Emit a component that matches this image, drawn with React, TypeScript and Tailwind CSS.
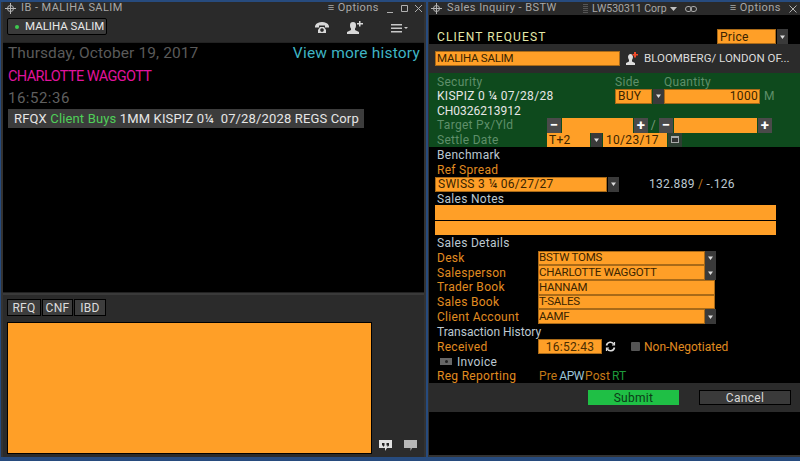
import React from "react";

const F = "font-['Roboto',Arial,sans-serif]";
const orange = "bg-[#ff9f27] text-[#3a2400] border border-[#a96a18]";

function Arrow() {
  return (
    <div className="w-[11px] h-full bg-[#3a3a3a] flex items-center justify-center shrink-0">
      <svg width="5" height="4" viewBox="0 0 5 4"><path d="M0 0.5h5L2.5 4z" fill="#ddd" /></svg>
    </div>
  );
}

function Win({ children }: { children: React.ReactNode }) {
  return <div className="flex items-center h-[13px] shrink-0 bg-[#2a2a2a] text-[#a8a8a8] text-[11px] tracking-[0.45px] whitespace-nowrap">{children}</div>;
}

function Move() {
  return (
    <svg width="11" height="11" viewBox="0 0 11 11" className="ml-[2px] mr-[5px] shrink-0">
      <circle cx="5.5" cy="5.5" r="3" fill="none" stroke="#b5b5b5" />
      <path d="M5.5 0v11M0 5.5h11" stroke="#b5b5b5" />
    </svg>
  );
}

function Row({ children, className = "" }: { children: React.ReactNode; className?: string }) {
  return <div className={`h-[14.7px] flex items-center text-[12px] tracking-[0.3px] whitespace-nowrap ${className}`}>{children}</div>;
}

function Step({ t }: { t: string }) {
  return <div className="w-[14px] h-full bg-[#4a4a4a] text-white text-[15px] leading-[12px] font-bold flex items-center justify-center shrink-0">{t}</div>;
}

function DetailRow({ label, value, arrow }: { label: string; value: string; arrow?: boolean }) {
  return (
    <Row className="pl-[8px]">
      <div className="w-[101px] text-[#e08c20] shrink-0">{label}</div>
      {arrow ? (
        <div className="flex h-[14.7px] w-[178px]">
          <div className={`${orange} flex-1 flex items-center text-[11.500px] tracking-[-0.25px]`}>{value}</div>
          <Arrow />
        </div>
      ) : (
        <div className={`${orange} w-[177px] h-[14.7px] flex items-center text-[11.500px] tracking-[-0.25px]`}>{value}</div>
      )}
    </Row>
  );
}

export default function App() {
  return (
    <div className={`${F} w-[800px] h-[461px] overflow-hidden bg-[#274b7e] pt-[2px] pb-[4px] flex`}>
      {/* Left window */}
      <div className="w-[425px] ml-[1px] h-full flex flex-col border-x-2 border-[#333]">
        <Win>
          <Move />
          <span>IB - MALIHA SALIM</span>
          <span className="ml-auto mr-[8px]">≡ Options</span>
          <svg width="36" height="9" viewBox="0 0 36 9" className="mr-[1px]" fill="none" stroke="#b0b0b0">
            <path d="M0 8.500h6M14.500 1.500h6v6h-6zM28 1l7 7M35 1l-7 7" />
          </svg>
        </Win>
        <div className="h-[27px] bg-[#2a2a2a] flex items-start pt-[3px] pl-[4px] shrink-0">
          <div className="h-[17px] w-[100px] bg-[#3a3a3a] border border-black rounded-[2px] flex items-center text-[11.500px] tracking-[0px] text-[#e8e8e8] pl-[7px] whitespace-nowrap overflow-hidden">
            <span className="w-[4px] h-[4px] rounded-full bg-[#3ecb4f] mr-[6px] shrink-0" />
            MALIHA SALIM
          </div>
          <svg width="14" height="12" viewBox="0 0 14 12" className="ml-[208px] mt-[4px]" fill="#d8d8d8">
            <path d="M0 4C1 1 4 0 7 0s6 1 7 4v1.500H10V3.500H4v2H0zM3 11V8l2-3h4l2 3v3zM7 6.200a1.800 1.800 0 1 0 .01 0z" />
          </svg>
          <svg width="16" height="13" viewBox="0 0 16 13" className="ml-[18px] mt-[3px]" fill="#d8d8d8">
            <path d="M0 13v-2l4-2V7.500C3 6.500 3 5 3 4c0-2 1-3 3-3s3 1 3 3c0 1 0 2.500-1 3.500V9l4 2v2zM12 0h1.500v2H16v1.500h-2.500v2H12v-2h-2V2h2z" />
          </svg>
          <svg width="17" height="9" viewBox="0 0 17 9" className="ml-[28px] mt-[6px]" fill="#c8c8c8">
            <path d="M0 0h11v1.500H0zM0 3.500h11V5H0zM0 7h11v1.500H0zM13 3h4l-2 2z" />
          </svg>
        </div>
        <div className="h-[251px] bg-black border-y border-[#222] pl-[5px] pr-[4px] shrink-0">
          <div className="flex items-center h-[21px] text-[15.500px] tracking-[0.1px]">
            <span className="text-[#5a5a5a]">Thursday, October 19, 2017</span>
            <span className="ml-auto text-[#3fb4c4] tracking-[0.2px]">View more history</span>
          </div>
          <div className="h-[26px] flex items-center text-[14.500px] tracking-[-0.6px] text-[#e0139c]">CHARLOTTE WAGGOTT</div>
          <div className="h-[16px] flex items-center text-[15px] tracking-[0.5px] text-[#5f5f5f]">16:52:36</div>
          <div className="h-[19px] w-[356px] mt-[3px] bg-[#3c3c3c] flex items-center pl-[6px] text-[13px] tracking-[0.15px] text-[#e6e6e6] whitespace-nowrap">
            RFQX&nbsp;<span className="text-[#4fd058]">Client Buys</span>&nbsp;1MM KISPIZ 0¼&nbsp;&nbsp;07/28/2028 REGS Corp
          </div>
        </div>
        <div className="flex-1 bg-[#2b2b2b] border-t-2 border-[#3a3a3a] pl-[4px] pt-[4px] pb-[3px] flex flex-col min-h-0">
          <div className="flex gap-[1px] text-[12px] tracking-[0.3px] text-[#dcdcdc] shrink-0">
            <div className="h-[17px] w-[34px] bg-[#3d3d3d] border border-black flex items-center justify-center">RFQ</div>
            <div className="h-[17px] w-[31px] bg-[#3d3d3d] border border-black flex items-center justify-center">CNF</div>
            <div className="h-[17px] w-[32px] bg-[#3d3d3d] border border-black flex items-center justify-center">IBD</div>
          </div>
          <div className="flex items-end mt-[6px] flex-1 min-h-0">
            <div className="w-[365px] h-full bg-[#ff9f27] border border-black" />
            <svg width="13" height="12" viewBox="0 0 13 12" className="ml-[7px] mb-[2px]">
              <path d="M0 0h13v8H8l-2 3V8H0z" fill="#e0e0e0" />
              <path d="M3 3h2.500v2.500L4 7V5.500H3zM7.500 3H10v2.500L8.500 7V5.500h-1z" fill="#222" />
            </svg>
            <svg width="13" height="12" viewBox="0 0 13 12" className="ml-[12px] mb-[2px]">
              <path d="M0 0h13v8H8l-1.500 3V8H0z" fill="#b8b8b8" />
            </svg>
          </div>
        </div>
      </div>

      {/* Right window */}
      <div className="w-[372px] ml-[2px] h-full flex flex-col border-l border-[#333]">
        <Win>
          <Move />
          <span className="w-[136px] shrink-0">Sales Inquiry - BSTW</span>
          <svg width="5" height="10" viewBox="0 0 5 10" className="mr-[4px] shrink-0" fill="#555">
            <path d="M0 0h5v1H0zM0 2h5v1H0zM0 4h5v1H0zM0 6h5v1H0zM0 8h5v1H0z" />
          </svg>
          <span className="w-[78px] shrink-0 text-[10.500px] tracking-[0px]">LW530311 Corp</span>
          <svg width="7" height="4" viewBox="0 0 7 4" className="shrink-0" fill="#c0c0c0"><path d="M0 0h7L3.500 4z" /></svg>
          <svg width="12" height="6" viewBox="0 0 12 6" className="ml-[8px] shrink-0" fill="none" stroke="#aaa"><rect x="0.500" y="0.500" width="6" height="5" rx="2.500" /><rect x="5.500" y="0.500" width="6" height="5" rx="2.500" /></svg>
          <span className="ml-auto mr-[8px]">≡ Options</span>
          <svg width="8" height="8" viewBox="0 0 8 8" className="mr-[3px] shrink-0" fill="none" stroke="#b0b0b0"><path d="M0.500 0.500l7 7M7.500 0.500l-7 7" /></svg>
        </Win>
        <div className="h-[29px] bg-black flex items-end shrink-0 pl-[8px] text-[12px] tracking-[1.100px]">
          <span className="h-[15px] flex items-center text-[#e4e8a8]">CLIENT REQUEST</span>
          <div className="flex h-[15px] w-[71px] ml-auto mr-[12px] tracking-[0.3px]">
            <div className={`${orange} flex-1 pl-[2px] mr-[1px] flex items-center`}>Price</div>
            <Arrow />
          </div>
        </div>
        <div className="h-[29px] bg-[#2b2b2b] flex items-center pl-[6px] text-[11.500px] tracking-[0px] shrink-0 whitespace-nowrap">
          <div className={`${orange} w-[185px] h-[15px] pl-[1px] flex items-center tracking-[-0.25px]`}>MALIHA SALIM</div>
          <svg width="13" height="13" viewBox="0 0 13 13" className="ml-[6px] mr-[5px]">
            <path d="M0 13v-2l3-1.500V8C2.500 7 2 6 2 5c0-1.500 1-3 2.500-3S7 3.500 7 5c0 1-.5 2-1 3v1.500L9 11v2z" fill="#ddd" />
            <path d="M8 0h2v2h2v1.500h-2v2H8v-2H6.500V2H8z" fill="#f04a2a" />
          </svg>
          <span className="text-[#dcdcdc]">BLOOMBERG/ LONDON OF...</span>
        </div>
        <div className="h-[74px] bg-[#0e4a1d] pl-[8px] pt-[1.500px] text-[12px] tracking-[0.3px] shrink-0 text-[#5f8f6a] whitespace-nowrap">
          <div className="h-[14.500px] flex items-center">
            <span className="w-[178px]">Security</span>
            <span className="w-[49px]">Side</span>
            <span>Quantity</span>
          </div>
          <div className="h-[14.500px] flex items-center">
            <span className="w-[178px] text-[#e6e6e6]">KISPIZ 0 ¼ 07/28/28</span>
            <div className="flex h-[14.500px] w-[145px]">
              <div className={`${orange} w-[37px] pl-[2px] flex items-center`}>BUY</div>
              <div className="w-[11px] ml-[1px]"><Arrow /></div>
              <div className={`${orange} flex-1 flex items-center justify-end pr-[1px]`}>1000</div>
            </div>
            <span className="ml-[4px]">M</span>
          </div>
          <div className="h-[14.500px] flex items-center text-[#e6e6e6] text-[12px] tracking-[0px]">CH0326213912</div>
          <div className="h-[14.500px] flex items-center">
            <span className="w-[110px]">Target Px/Yld</span>
            <div className="flex h-[14.500px] w-[101px] gap-[1px]">
              <Step t="−" />
              <div className="flex-1 bg-[#ff9f27]" />
              <Step t="+" />
            </div>
            <span className="w-[11px] text-center text-[#7a9a7a]">/</span>
            <div className="flex h-[14.500px] w-[113px] gap-[1px]">
              <Step t="−" />
              <div className="flex-1 bg-[#ff9f27]" />
              <Step t="+" />
            </div>
          </div>
          <div className="h-[14.500px] flex items-center">
            <span className="w-[110px]">Settle Date</span>
            <div className="flex h-[14.500px] items-center">
              <div className="w-[43px] h-full bg-[#ff9f27] text-[#3a2400] pl-[2px] mr-[1px] flex items-center">T+2</div>
              <Arrow />
              <div className="w-[64px] h-full ml-[1px] bg-[#ff9f27] text-[#3a2400] pl-[3px] flex items-center">10/23/17</div>
              <div className="w-[14px] h-full bg-[#2f3f33] flex items-center justify-center ml-[1px]">
                <svg width="8" height="7" viewBox="0 0 8 7"><path d="M0 0h8v7H0z" fill="#aaa" /><path d="M1 2h6v4H1z" fill="#333" /></svg>
              </div>
            </div>
          </div>
        </div>
        <div className="h-[236px] bg-black shrink-0 pl-[6px] pt-[0.500px]">
          <Row className="pl-[2px] text-[#bcc8d0]">Benchmark</Row>
          <Row className="pl-[2px] text-[#e08c20]">Ref Spread</Row>
          <Row>
            <div className={`${orange} w-[172px] h-full pl-[2px] flex items-center`}>SWISS 3 ¼ 06/27/27</div>
            <div className="h-full ml-[1px]"><Arrow /></div>
            <span className="ml-[30px] text-[#bcc8d0]">132.889 <span className="text-[#c47a18]">/</span> -.126</span>
          </Row>
          <Row className="pl-[2px] text-[#bcc8d0]">Sales Notes</Row>
          <div className="w-[341px] h-[14.500px] bg-[#ff9f27] -mt-[0.800px]" />
          <div className="w-[341px] h-[14.500px] bg-[#ff9f27] mt-[1px]" />
          <Row className="pl-[2px] text-[#bcc8d0]">Sales Details</Row>
          <div className="-ml-[6px] mt-[0.500px]">
            <DetailRow label="Desk" value="BSTW TOMS" arrow />
            <DetailRow label="Salesperson" value="CHARLOTTE WAGGOTT" arrow />
            <DetailRow label="Trader Book" value="HANNAM" />
            <DetailRow label="Sales Book" value="T-SALES" />
            <DetailRow label="Client Account" value="AAMF" arrow />
          </div>
          <Row className="pl-[2px] text-[#bcc8d0] tracking-[0px] mt-[0.500px]">Transaction History</Row>
          <Row className="pl-[2px]">
            <span className="w-[101px] text-[#e08c20] shrink-0">Received</span>
            <div className={`${orange} w-[64px] h-full flex items-center justify-center text-[#4a2d00]`}>16:52:43</div>
            <svg width="11" height="11" viewBox="0 0 11 11" className="ml-[3px]" fill="none" stroke="#ddd" strokeWidth="1.600">
              <path d="M1.500 4.500A4 4 0 0 1 9 3.500M9.500 6.500A4 4 0 0 1 2 7.500" />
              <path d="M9.500 1v3H7M1.500 10V7H4" strokeWidth="1.200" />
            </svg>
            <span className="w-[9px] h-[9px] bg-[#555] ml-[15px] mr-[4px] rounded-[1px]" />
            <span className="text-[#e08c20] tracking-[0px]">Non-Negotiated</span>
          </Row>
          <Row className="pl-[5px] text-[#bcc8d0] mt-[0.500px]">
            <span className="w-[12px] h-[7px] bg-[#666] mr-[5px] flex items-center justify-center"><span className="w-[3px] h-[3px] rounded-full bg-[#222]" /></span>
            Invoice
          </Row>
          <Row className="pl-[2px]">
            <span className="w-[102px] text-[#e08c20] shrink-0">Reg Reporting</span>
            <span className="text-[#c47a18] tracking-[0.1px]">Pre</span>
            <span className="text-[#9cc4d8] tracking-[-0.4px] ml-[2px]">APW</span>
            <span className="text-[#c47a18] tracking-[0.1px] ml-[1px]">Post</span>
            <span className="text-[#1e9a3c] tracking-[0.1px] ml-[2px]">RT</span>
          </Row>
        </div>
        <div className="h-[29px] bg-[#2b2b2b] shrink-0 flex items-center text-[12px] tracking-[0.3px]">
          <div className="w-[91px] h-[15px] bg-[#1fbf45] text-[#0b3a17] flex items-center justify-center ml-[159px]">Submit</div>
          <div className="w-[92px] h-[15px] bg-[#3a3a3a] border border-black text-[#d8d8d8] flex items-center justify-center ml-[20px]">Cancel</div>
        </div>
        <div className="flex-1 bg-black border-b-2 border-[#333]" />
      </div>
    </div>
  );
}
